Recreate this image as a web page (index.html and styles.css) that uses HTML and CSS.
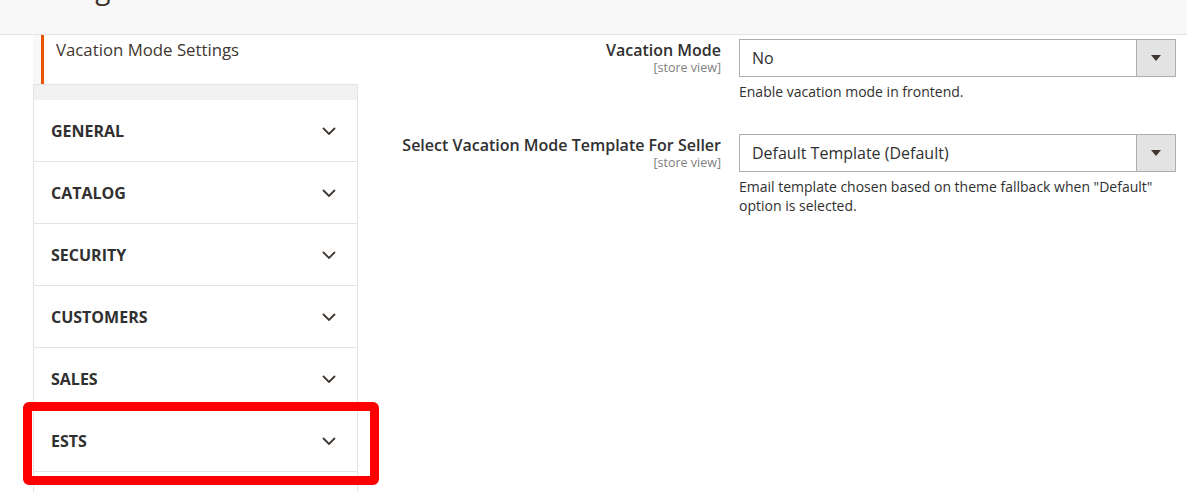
FILE: index.html
```html
<!DOCTYPE html>
<html lang="en">
<head>
  <meta charset="UTF-8" />
  <title>Configuration</title>
  <link rel="stylesheet" href="styles.css">
</head>
<body>
  <header class="page-head">
    <h1>Configuration</h1>
  </header>

  <div class="page">
    <aside class="tabs">
      <div class="sub-list">
        <a class="sub-item active">Vacation Mode Settings</a>
      </div>
      <div class="tabs-gap"></div>
      <div class="tab">GENERAL <svg class="chev" viewBox="0 0 14 8"><polyline points="1,1 7,7 13,1"/></svg></div>
      <div class="tab">CATALOG <svg class="chev" viewBox="0 0 14 8"><polyline points="1,1 7,7 13,1"/></svg></div>
      <div class="tab">SECURITY <svg class="chev" viewBox="0 0 14 8"><polyline points="1,1 7,7 13,1"/></svg></div>
      <div class="tab">CUSTOMERS <svg class="chev" viewBox="0 0 14 8"><polyline points="1,1 7,7 13,1"/></svg></div>
      <div class="tab">SALES <svg class="chev" viewBox="0 0 14 8"><polyline points="1,1 7,7 13,1"/></svg></div>
      <div class="tab">ESTS <svg class="chev" viewBox="0 0 14 8"><polyline points="1,1 7,7 13,1"/></svg></div>
      <div class="tab tab-last"></div>
      <div class="highlight"></div>
    </aside>

    <main class="fields">
      <div class="row">
        <label class="label">
          <span>Vacation Mode</span>
          <small>[store view]</small>
        </label>
        <div class="control">
          <div class="select">
            <span>No</span>
            <span class="arrow"></span>
          </div>
          <p class="note">Enable vacation mode in frontend.</p>
        </div>
      </div>

      <div class="row">
        <label class="label">
          <span>Select Vacation Mode Template For Seller</span>
          <small>[store view]</small>
        </label>
        <div class="control">
          <div class="select">
            <span>Default Template (Default)</span>
            <span class="arrow"></span>
          </div>
          <p class="note">Email template chosen based on theme fallback when "Default" option is selected.</p>
        </div>
      </div>
    </main>
  </div>
</body>
</html>
```

FILE: styles.css
```css
:root {
  --border: #e3e3e3;
  --text: #303030;
  --orange: #eb5202;
}
* { box-sizing: border-box; margin: 0; padding: 0; }
body {
  font-family: "Open Sans", Arial, sans-serif;
  color: var(--text);
  background: #fff;
  height: 492px;
  overflow: hidden;
}
.page-head {
  height: 35px;
  background: #f8f8f8;
  border-bottom: 1px solid var(--border);
  overflow: hidden;
  padding-left: 27px;
}
.page-head h1 {
  font-size: 28px;
  font-weight: 400;
  color: #41362f;
  line-height: 28px;
  margin-top: -26px;
}
.page {
  display: flex;
}
.tabs {
  position: relative;
  width: 325px;
  margin-left: 33px;
  flex-shrink: 0;
}
.sub-list {
  background: #f8f8f8;
  padding-left: 8px;
}
.sub-item {
  display: block;
  height: 49px;
  background: #fff;
  border-left: 3px solid var(--orange);
  padding: 3px 0 0 12px;
  font-size: 16.8px;
  color: #41362f;
}
.tabs-gap {
  height: 16px;
  background: #f1f1f1;
  border: 1px solid var(--border);
  border-bottom: none;
}
.tab {
  height: 62px;
  display: flex;
  align-items: center;
  justify-content: space-between;
  padding: 0 21px 0 17px;
  border: 1px solid var(--border);
  border-top: none;
  font-size: 16px;
  font-weight: 700;
  color: var(--text);
}
.chev {
  width: 14px;
  height: 8px;
  fill: none;
  stroke: #41362f;
  stroke-width: 1.8;
}
.highlight {
  position: absolute;
  left: -10px;
  top: 367px;
  width: 356px;
  height: 83px;
  border: 9px solid #ff0000;
  border-radius: 6px;
}
.fields {
  flex: 1;
  padding: 4px 11px 0 0;
}
.row {
  display: flex;
  gap: 18px;
  margin-bottom: 17px;
}
.label {
  flex: 1;
  text-align: right;
  display: flex;
  flex-direction: column;
  padding-top: 1px;
}
.label span {
  font-size: 16px;
  font-weight: 600;
  line-height: 21px;
  color: var(--text);
}
.label small {
  font-size: 12.5px;
  line-height: 13px;
  color: #808080;
}
.control {
  width: 437px;
  min-height: 78px;
}
.select {
  height: 38px;
  border: 1px solid #adadad;
  display: flex;
  align-items: center;
  justify-content: space-between;
  font-size: 16px;
  color: var(--text);
}
.select span:first-child {
  padding-left: 12px;
}
.arrow {
  width: 39px;
  height: 100%;
  background: #e3e3e3;
  border-left: 1px solid #adadad;
  display: flex;
  align-items: center;
  justify-content: center;
}
.arrow::after {
  content: "";
  border-left: 5px solid transparent;
  border-right: 5px solid transparent;
  border-top: 6px solid #41362f;
}
.note {
  font-size: 14px;
  line-height: 19px;
  color: #303030;
  margin-top: 5px;
}
```
